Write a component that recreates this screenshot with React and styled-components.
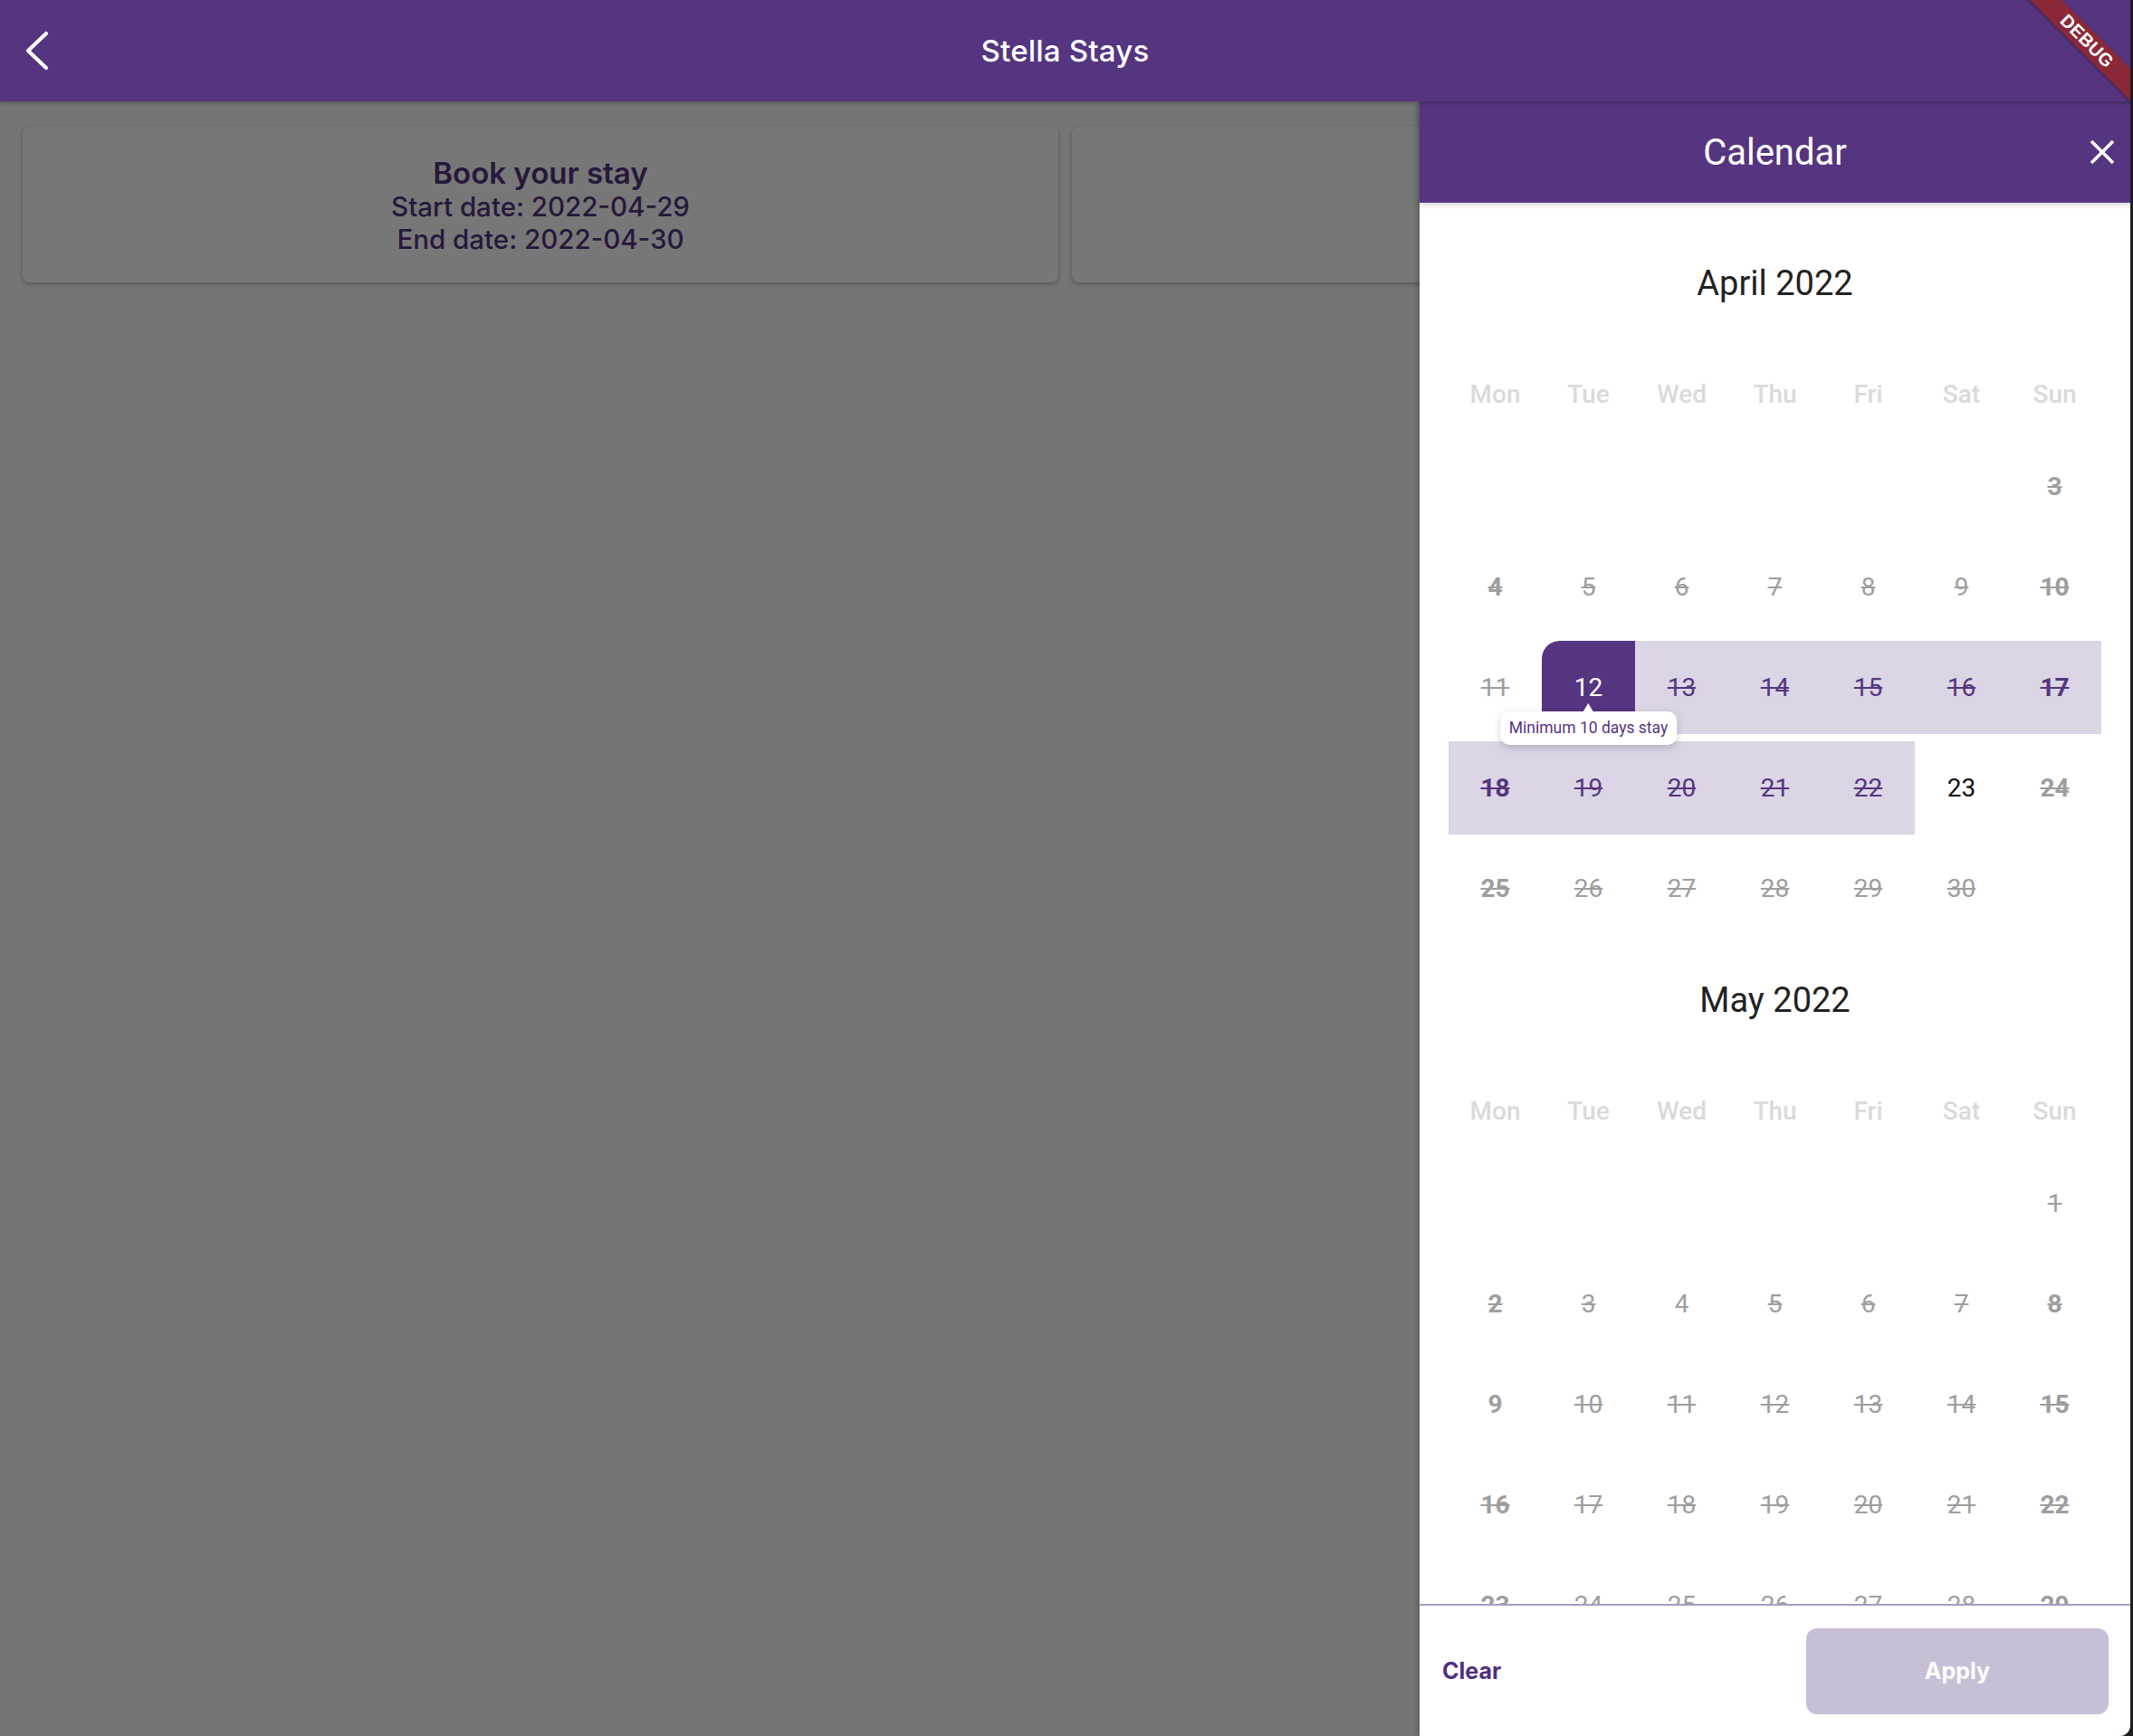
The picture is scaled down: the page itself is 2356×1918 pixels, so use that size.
import React from 'react';
import styled, { createGlobalStyle } from 'styled-components';

const PURPLE = '#55357f';
const BAND = '#dcd5e6';
const GRAY = '#9e9e9e';

const GlobalStyle = createGlobalStyle`
  html, body {
    margin: 0;
    padding: 0;
    background: #1f1f1f;
  }
  * {
    box-sizing: border-box;
  }
`;

const Screen = styled.div`
  position: relative;
  width: 2353px;
  height: 1918px;
  display: flex;
  flex-direction: column;
  overflow: hidden;
  background: #fafafa;
  border-bottom-right-radius: 12px;
  font-family: Roboto, 'Noto Sans', sans-serif;
`;

const AppBar = styled.header`
  position: relative;
  z-index: 3;
  height: 112px;
  flex: none;
  display: grid;
  grid-template-columns: 112px 1fr 112px;
  align-items: center;
  background: ${PURPLE};
  box-shadow: 0 2px 4px rgba(0, 0, 0, 0.25);
`;

const BackButton = styled.button`
  width: 80px;
  height: 80px;
  padding: 0 0 0 27px;
  border: none;
  background: transparent;
  display: flex;
  align-items: center;
  cursor: pointer;
`;

const AppTitle = styled.h1`
  margin: 0;
  text-align: center;
  color: #fff;
  font-family: Inter, 'Open Sans', sans-serif;
  font-size: 33px;
  font-weight: 500;
  letter-spacing: 0.2px;
`;

const DebugRibbon = styled.div`
  position: absolute;
  z-index: 10;
  left: 2205px;
  top: 33px;
  width: 200px;
  height: 25px;
  transform: rotate(45deg);
  background: #8a2837;
  box-shadow: 0 1px 4px rgba(0, 0, 0, 0.35);
  color: #fff;
  font-family: 'Liberation Sans', Arial, sans-serif;
  font-weight: 700;
  font-size: 20px;
  line-height: 25px;
  text-align: center;
  letter-spacing: 0.3px;
`;

const Main = styled.main`
  position: relative;
  flex: 1;
`;

const CardRow = styled.div`
  display: grid;
  grid-template-columns: 1fr 1fr;
  gap: 15px;
  padding: 28px 25px;
`;

const Card = styled.section`
  height: 172px;
  background: #fff;
  border-radius: 8px;
  box-shadow: 0 2px 5px rgba(0, 0, 0, 0.25);
  display: flex;
  flex-direction: column;
  align-items: center;
  justify-content: center;
  color: ${PURPLE};
  font-family: Inter, 'Open Sans', sans-serif;
  padding-top: 2px;
`;

const CardTitle = styled.div`
  font-size: 33px;
  font-weight: 600;
  line-height: 38px;
`;

const CardLine = styled.div`
  font-size: 29.5px;
  font-weight: 500;
  line-height: 36px;
`;

const Scrim = styled.div`
  position: absolute;
  inset: 0;
  background: rgba(0, 0, 0, 0.535);
`;

const Drawer = styled.aside`
  position: absolute;
  top: 0;
  right: 0;
  bottom: 0;
  width: 785px;
  display: flex;
  flex-direction: column;
  background: #fff;
  box-shadow: -2px 0 6px rgba(0, 0, 0, 0.25);
`;

const DrawerHeader = styled.div`
  position: relative;
  z-index: 2;
  height: 112px;
  flex: none;
  display: grid;
  grid-template-columns: 1fr auto 1fr;
  align-items: center;
  background: ${PURPLE};
  box-shadow: 0 2px 6px rgba(0, 0, 0, 0.18);
`;

const DrawerTitle = styled.h2`
  grid-column: 2;
  margin: 0;
  color: #fff;
  font-size: 40px;
  font-weight: 400;
`;

const CloseButton = styled.button`
  justify-self: end;
  margin-right: 9px;
  width: 44px;
  height: 44px;
  border: none;
  background: transparent;
  display: flex;
  align-items: center;
  justify-content: center;
  cursor: pointer;
`;

const Scroll = styled.div`
  flex: 1;
  overflow: hidden;
  padding: 17px 32px 0;
`;

const Month = styled.div`
  padding-top: 47px;
`;

const MonthTitle = styled.div`
  height: 50px;
  line-height: 50px;
  text-align: center;
  font-size: 38px;
  color: #222;
`;

const WeekRow = styled.div`
  display: grid;
  grid-template-columns: repeat(7, 1fr);
  height: 60px;
  margin-top: 67px;
  margin-bottom: 21px;
  align-items: center;
`;

const WeekDay = styled.div`
  text-align: center;
  font-size: 28px;
  font-weight: 500;
  color: #dadada;
`;

const DayGrid = styled.div`
  display: grid;
  grid-template-columns: repeat(7, 1fr);
  grid-auto-rows: 103px;
  row-gap: 8px;
`;

const toneColor = {
  gray: GRAY,
  band: PURPLE,
  plain: '#111',
  selected: '#fff',
};

const Day = styled.div`
  position: relative;
  display: flex;
  align-items: center;
  justify-content: center;
  font-size: 28px;
  font-weight: ${(p) => (p.$bold ? 700 : 400)};
  color: ${(p) => toneColor[p.$tone]};
  text-decoration: ${(p) => (p.$strike ? 'line-through' : 'none')};
  text-decoration-thickness: 2px;
  background: ${(p) =>
    p.$tone === 'selected' ? PURPLE : p.$tone === 'band' ? BAND : 'transparent'};
  border-radius: ${(p) => (p.$tone === 'selected' ? '20px 0 0 20px' : '0')};
`;

const Tooltip = styled.div`
  position: absolute;
  z-index: 2;
  top: 78px;
  left: 50%;
  transform: translateX(-50%);
  white-space: nowrap;
  padding: 0 10px;
  height: 37px;
  line-height: 37px;
  background: #fff;
  border-radius: 10px;
  box-shadow: 0 3px 10px rgba(0, 0, 0, 0.18);
  color: ${PURPLE};
  font-size: 17.5px;
  font-weight: 400;
  text-decoration: none;

  &::before {
    content: '';
    position: absolute;
    top: -9px;
    left: 50%;
    margin-left: -6px;
    border-left: 6px solid transparent;
    border-right: 6px solid transparent;
    border-bottom: 10px solid #fff;
  }
`;

const Divider = styled.div`
  height: 2px;
  flex: none;
  background: #a99bbf;
`;

const Footer = styled.footer`
  height: 144px;
  flex: none;
  display: flex;
  align-items: center;
  justify-content: space-between;
  padding: 0 24px 0 25px;
  font-family: Inter, 'Open Sans', sans-serif;
`;

const ClearButton = styled.button`
  border: none;
  background: transparent;
  padding: 0;
  color: #4f2f80;
  font-family: inherit;
  font-size: 25px;
  font-weight: 700;
  cursor: pointer;
`;

const ApplyButton = styled.button`
  width: 334px;
  height: 95px;
  border: none;
  border-radius: 12px;
  background: #c8bed6;
  color: #fff;
  font-family: inherit;
  font-size: 25px;
  font-weight: 700;
`;

const WEEKDAYS = ['Mon', 'Tue', 'Wed', 'Thu', 'Fri', 'Sat', 'Sun'];

// flags: b = bold, s = strike, r = inside range, x = selected, p = plain
const d = (n, flags = '') => ({
  n,
  bold: flags.includes('b'),
  strike: flags.includes('s'),
  tone: flags.includes('x')
    ? 'selected'
    : flags.includes('r')
    ? 'band'
    : flags.includes('p')
    ? 'plain'
    : 'gray',
});

const blanks = (k) => Array.from({ length: k }, () => null);

const april = [
  ...blanks(6), d(3, 'bs'),
  d(4, 'bs'), d(5, 's'), d(6, 's'), d(7, 's'), d(8, 's'), d(9, 's'), d(10, 'bs'),
  d(11, 's'), d(12, 'x'), d(13, 'rs'), d(14, 'rs'), d(15, 'rs'), d(16, 'rs'), d(17, 'rbs'),
  d(18, 'rbs'), d(19, 'rs'), d(20, 'rs'), d(21, 'rs'), d(22, 'rs'), d(23, 'p'), d(24, 'bs'),
  d(25, 'bs'), d(26, 's'), d(27, 's'), d(28, 's'), d(29, 's'), d(30, 's'), null,
];

const may = [
  ...blanks(6), d(1, 's'),
  d(2, 'bs'), d(3, 's'), d(4), d(5, 's'), d(6, 's'), d(7, 's'), d(8, 'bs'),
  d(9, 'b'), d(10, 's'), d(11, 's'), d(12, 's'), d(13, 's'), d(14, 's'), d(15, 'bs'),
  d(16, 'bs'), d(17, 's'), d(18, 's'), d(19, 's'), d(20, 's'), d(21, 's'), d(22, 'bs'),
  d(23, 'bs'), d(24, 's'), d(25, 's'), d(26, 's'), d(27, 's'), d(28, 's'), d(29, 'bs'),
];

const MonthView = ({ title, days }) => (
  <Month>
    <MonthTitle>{title}</MonthTitle>
    <WeekRow>
      {WEEKDAYS.map((w) => (
        <WeekDay key={w}>{w}</WeekDay>
      ))}
    </WeekRow>
    <DayGrid>
      {days.map((day, i) =>
        day ? (
          <Day key={i} $tone={day.tone} $bold={day.bold} $strike={day.strike}>
            {day.n}
            {day.tone === 'selected' && <Tooltip>Minimum 10 days stay</Tooltip>}
          </Day>
        ) : (
          <div key={i} />
        )
      )}
    </DayGrid>
  </Month>
);

const App = () => {
  return (
    <>
      <GlobalStyle />
      <Screen>
        <AppBar>
          <BackButton aria-label="Back">
            <svg width="28" height="44" viewBox="0 0 28 44">
              <polyline
                points="24,3 4,22 24,41"
                fill="none"
                stroke="#fff"
                strokeWidth="4.2"
                strokeLinecap="round"
                strokeLinejoin="round"
              />
            </svg>
          </BackButton>
          <AppTitle>Stella Stays</AppTitle>
        </AppBar>
        <DebugRibbon>DEBUG</DebugRibbon>

        <Main>
          <CardRow>
            <Card>
              <CardTitle>Book your stay</CardTitle>
              <CardLine>Start date: 2022-04-29</CardLine>
              <CardLine>End date: 2022-04-30</CardLine>
            </Card>
            <Card />
          </CardRow>
          <Scrim />

          <Drawer>
            <DrawerHeader>
              <DrawerTitle>Calendar</DrawerTitle>
              <CloseButton aria-label="Close">
                <svg width="28" height="28" viewBox="0 0 28 28">
                  <path d="M2 2 L26 26 M26 2 L2 26" stroke="#fff" strokeWidth="3.6" />
                </svg>
              </CloseButton>
            </DrawerHeader>
            <Scroll>
              <MonthView title="April 2022" days={april} />
              <MonthView title="May 2022" days={may} />
            </Scroll>
            <Divider />
            <Footer>
              <ClearButton>Clear</ClearButton>
              <ApplyButton>Apply</ApplyButton>
            </Footer>
          </Drawer>
        </Main>
      </Screen>
    </>
  );
};

export default App;
